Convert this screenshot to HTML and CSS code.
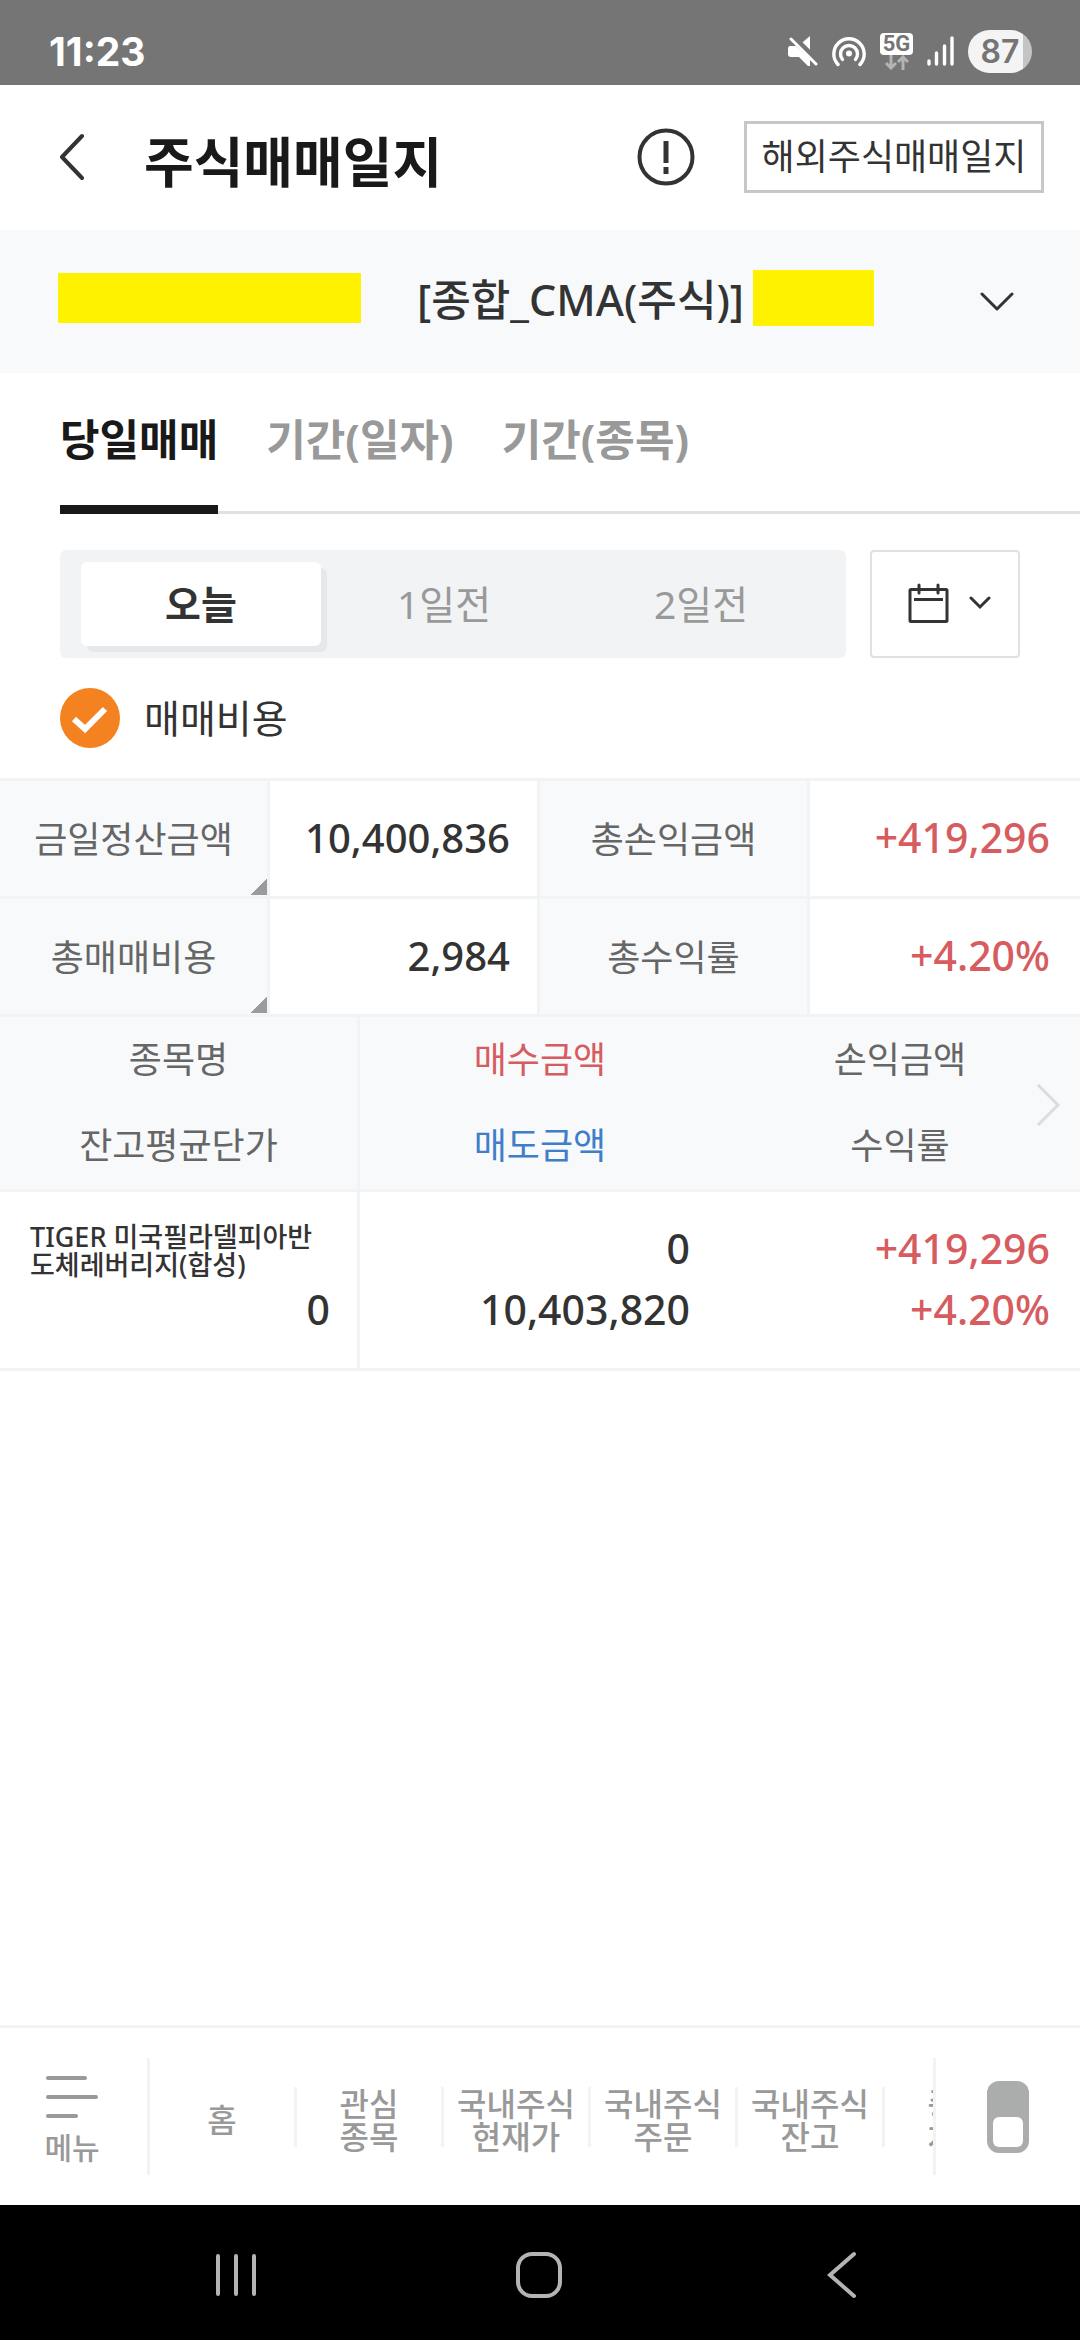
FILE: index.html
```html
<!DOCTYPE html>
<html lang="ko">
<head>
<meta charset="utf-8">
<meta name="viewport" content="width=device-width, initial-scale=1">
<title>주식매매일지</title>
<link rel="stylesheet" href="styles.css">
</head>
<body>
<div class="app">
  <div class="status">
    <span class="clock">11:23</span>
    <div class="status-icons">
      <svg width="30" height="30" viewBox="0 0 30 30" fill="#fff"><path d="M12.500 8 22 0V16.500zM2 10h6L22 23v7h-2L11 21H3Q0 21 0 18v-5q0-3 2-3z"/><path d="M3 3 28 28" stroke="#757575" stroke-width="6" transform="translate(2 -2)"/><path d="M3 3 28 28" stroke="#fff" stroke-width="3" stroke-linecap="round"/></svg>
      <svg width="34" height="31" viewBox="0 0 34 31" fill="none" stroke="#fff" stroke-width="3.400" stroke-linecap="round"><path d="M6 28.500A15.200 15.200 0 1 1 28 28.500"/><path d="M10.500 23.500a8.500 8.500 0 1 1 13 0"/><circle cx="17" cy="17.500" r="3" fill="#fff" stroke="none"/></svg>
      <div class="net">
        <span class="net-label">5G</span>
        <svg width="24" height="15" viewBox="0 0 24 15" fill="none" stroke="#b4b4b4" stroke-width="3"><path d="M6 0v13M1 8l5 5 5-5M18 15V2M13 7l5-5 5 5"/></svg>
      </div>
      <svg width="27" height="30" viewBox="0 0 27 30" stroke="#fff" stroke-width="3.400" stroke-linecap="round"><path d="M2 25v3M9.500 17v11M17.500 10v18M25 2v26"/></svg>
      <span class="battery">87</span>
    </div>
  </div>

  <header class="header">
    <button class="icon-btn" aria-label="뒤로"><svg width="26" height="48" viewBox="0 0 26 48" fill="none" stroke="#333" stroke-width="4" stroke-linecap="round" stroke-linejoin="round"><path d="M24 3 4 24 24 45"/></svg></button>
    <h1 class="title">주식매매일지</h1>
    <button class="icon-btn info" aria-label="안내"><svg width="58" height="58" viewBox="0 0 58 58" fill="none" stroke="#333"><circle cx="29" cy="29" r="26.500" stroke-width="4"/><path d="M29 13v22M29 39v7" stroke-width="5"/></svg></button>
    <button class="outline-btn">해외주식매매일지</button>
  </header>

  <button class="account" aria-label="계좌 선택">
    <span class="mask mask-number"></span>
    <span class="account-name">[종합_CMA(주식)]</span>
    <span class="mask mask-owner"></span>
    <svg class="account-arrow" width="34" height="20" viewBox="0 0 34 20" fill="none" stroke="#333" stroke-width="3" stroke-linecap="round" stroke-linejoin="round"><path d="M2 2 17 17 32 2"/></svg>
  </button>

  <nav class="tabs">
    <a href="#" class="tab tab-on">당일매매</a>
    <a href="#" class="tab">기간(일자)</a>
    <a href="#" class="tab">기간(종목)</a>
  </nav>

  <div class="filters">
    <div class="segment">
      <button class="seg seg-on">오늘</button>
      <button class="seg">1일전</button>
      <button class="seg">2일전</button>
    </div>
    <button class="date-btn" aria-label="날짜 선택">
      <svg width="41" height="40" viewBox="0 0 41 40" fill="none" stroke="#333" stroke-width="3" stroke-linecap="round"><rect x="2" y="6.500" width="37" height="32" rx="1"/><path d="M11 2v8M30 2v8"/><path d="M6 16.500h29" stroke-linecap="butt"/></svg>
      <svg width="22" height="14" viewBox="0 0 22 14" fill="none" stroke="#333" stroke-width="3" stroke-linecap="round"><path d="M2 2 11 11 20 2"/></svg>
    </button>
  </div>

  <label class="cost"><input type="checkbox" class="check" checked>매매비용</label>

  <table class="summary">
    <tr><th class="more">금일정산금액</th><td>10,400,836</td><th>총손익금액</th><td class="up">+419,296</td></tr>
    <tr><th class="more">총매매비용</th><td>2,984</td><th>총수익률</th><td class="up">+4.20%</td></tr>
  </table>

  <div class="trades-wrap">
    <table class="trades">
      <thead>
        <tr>
          <th><span>종목명</span><span>잔고평균단가</span></th>
          <th><span class="buy">매수금액</span><span class="sell">매도금액</span></th>
          <th><span>손익금액</span><span>수익률</span></th>
        </tr>
      </thead>
      <tbody>
        <tr>
          <td><span class="stock">TIGER 미국필라델피아반도체레버리지(합성)</span><span>0</span></td>
          <td><span>0</span><span>10,403,820</span></td>
          <td class="up"><span>+419,296</span><span>+4.20%</span></td>
        </tr>
      </tbody>
    </table>
    <svg class="scroll-hint" width="24" height="42" viewBox="0 0 24 42" fill="none" stroke="#d9dde0" stroke-width="3"><path d="M2 1 22 21 2 41"/></svg>
  </div>

  <footer class="dock">
    <button class="menu">
      <svg width="54" height="42" viewBox="0 0 54 42" stroke="#999" stroke-width="4" stroke-linecap="round"><path d="M3 2h37M3 21h48M3 40h28"/></svg>
      메뉴
    </button>
    <nav class="quick">
      <a href="#">홈</a>
      <a href="#">관심<br>종목</a>
      <a href="#">국내주식<br>현재가</a>
      <a href="#">국내주식<br>주문</a>
      <a href="#">국내주식<br>잔고</a>
      <a href="#">종합<br>차트</a>
    </nav>
    <div class="switch-box"><button class="switch" aria-label="화면 전환"><span class="knob"></span></button></div>
  </footer>

  <div class="sysnav">
    <button class="icon-btn" aria-label="최근 앱"><svg width="48" height="48" viewBox="0 0 48 48" stroke="#b4b4b4" stroke-width="4" stroke-linecap="round"><path d="M6 5v38M24 5v38M42 5v38"/></svg></button>
    <button class="icon-btn" aria-label="홈"><svg width="48" height="48" viewBox="0 0 48 48" fill="none" stroke="#b4b4b4" stroke-width="4"><rect x="3" y="3" width="42" height="42" rx="14"/></svg></button>
    <button class="icon-btn" aria-label="이전"><svg width="48" height="48" viewBox="0 0 48 48" fill="none" stroke="#b4b4b4" stroke-width="4" stroke-linecap="round"><path d="M36 3 12 24 36 45"/></svg></button>
  </div>
</div>
</body>
</html>
```

FILE: styles.css
```css
* { box-sizing: border-box; }
body {
  margin: 0;
  background: #fff;
  color: #333;
  font-family: "Noto Sans", "Noto Sans CJK KR", sans-serif;
}
button {
  margin: 0;
  padding: 0;
  border: 0;
  background: none;
  color: inherit;
  font: inherit;
}
a { color: inherit; text-decoration: none; }
svg { display: block; flex: none; }
.app {
  display: flex;
  flex-direction: column;
  min-height: 100vh;
}
.icon-btn { display: flex; }

.status {
  display: flex;
  align-items: center;
  justify-content: space-between;
  height: 85px;
  padding: 17px 48px 0 49px;
  background: #757575;
  color: #fff;
  font-family: Inter, sans-serif;
  font-weight: 700;
}
.clock { font-size: 39px; }
.status-icons { display: flex; align-items: center; gap: 14px; }
.net { display: flex; flex-direction: column; align-items: center; }
.net-label {
  width: 33px;
  border-radius: 4px;
  background: #fff;
  color: #757575;
  font-family: Roboto, sans-serif;
  font-size: 22px;
  line-height: 22px;
  text-align: center;
}
.battery {
  width: 64px;
  border-radius: 22px;
  background: linear-gradient(to right, #f4f4f4 86%, #c4c4c4 86%);
  color: #757575;
  font-size: 32px;
  font-weight: 600;
  line-height: 43px;
  text-align: center;
}

.header {
  display: flex;
  align-items: center;
  height: 145px;
  padding: 0 36px 2px 58px;
}
.title {
  margin: 6px 0 0 60px;
  color: #191919;
  font-family: "Noto Sans CJK KR", sans-serif;
  font-size: 54px;
  font-weight: 700;
}
.info { margin-left: auto; }
.outline-btn {
  margin-left: 49px;
  width: 300px;
  height: 72px;
  border: 3px solid #c5c7c9;
  font-size: 36px;
  line-height: 64px;
}

.account {
  display: flex;
  align-items: center;
  height: 143px;
  padding: 0 66px 8px 58px;
  background: #f7f9fb;
  text-align: left;
}
.mask { background: #fff200; }
.mask-number { width: 303px; height: 50px; }
.mask-owner { width: 121px; height: 56px; margin-left: 9px; }
.account-name { margin-left: 56px; font-size: 43px; font-weight: 500; }
.account-arrow { margin: 8px 0 0 auto; }

.tabs {
  display: flex;
  gap: 48px;
  height: 141px;
  margin-left: 60px;
  box-shadow: inset 0 -3px #dde2e2;
  color: #999;
  font-size: 43px;
  font-weight: 700;
  line-height: 134px;
}
.tab-on { border-bottom: 9px solid #191919; color: #191919; }

.filters { display: flex; gap: 24px; padding: 36px 60px 0; }
.segment {
  display: grid;
  flex: 1;
  grid-template-columns: 240fr 246fr 268fr;
  padding: 12px 11px 12px 21px;
  border-radius: 6px;
  background: #f1f3f5;
}
.seg { color: #999; font-size: 39px; line-height: 84px; }
.seg-on {
  border-radius: 6px;
  background: #fff;
  box-shadow: 6px 6px #e7e8ea;
  color: #333;
  font-weight: 700;
}
.date-btn {
  display: flex;
  align-items: center;
  justify-content: center;
  gap: 20px;
  width: 150px;
  height: 108px;
  padding: 0 0 2px 8px;
  border: 2px solid #dde2e4;
  border-radius: 4px;
}

.cost {
  display: flex;
  align-items: center;
  align-self: flex-start;
  gap: 24px;
  margin: 30px 60px;
  font-size: 39px;
  line-height: 60px;
}
.check {
  appearance: none;
  width: 60px;
  height: 60px;
  margin: 0;
  border-radius: 50%;
  background: #f58220 url("data:image/svg+xml,%3Csvg xmlns='http://www.w3.org/2000/svg' viewBox='0 0 60 60'%3E%3Cpath d='M14 31 25 41 45 21' fill='none' stroke='%23fff' stroke-width='6'/%3E%3C/svg%3E");
}

table { width: 100%; border-collapse: separate; border-spacing: 0; table-layout: fixed; }
th {
  background: #f7f9fb;
  color: #666;
  font-size: 36px;
  font-weight: 400;
  text-align: center;
}
td {
  padding: 0 27px 0 0;
  font-size: 41px;
  font-weight: 500;
  text-align: right;
}
th, td { border-right: 3px solid #f1f3f5; border-bottom: 3px solid #f1f3f5; }
.up { color: #d65c60; }
.summary { border-top: 3px solid #f1f3f5; }
.summary th, .summary td { height: 118px; padding-bottom: 3px; }
.summary th { padding: 0 0 3px; }
.summary td:nth-child(2) { font-size: 40px; }
.summary td:last-child { border-right: 0; padding-right: 30px; }
.more {
  background: linear-gradient(135deg, transparent 50%, #999b9d 50%) right 0 bottom 1px / 16px 16px no-repeat #f7f9fb;
}
.trades-wrap { position: relative; }
.trades span { display: block; }
.trades th { padding: 0; height: 174px; line-height: 86px; }
.trades td { height: 179px; padding-bottom: 3px; line-height: 61px; }
.trades th + th, .trades td + td { border-right: 0; }
.trades td + td { padding-right: 30px; }
.trades .buy { color: #d65c60; }
.trades .sell { color: #3f7ec8; }
.trades .stock {
  padding: 5px 0 0 30px;
  font-size: 27px;
  line-height: 28px;
  text-align: left;
  word-break: break-all;
}
.scroll-hint { position: absolute; top: 67px; right: 20px; }

.dock {
  display: flex;
  align-items: center;
  height: 180px;
  margin-top: auto;
  border-top: 3px solid #f1f3f4;
  color: #999;
  font-weight: 500;
}
.menu {
  display: flex;
  flex-direction: column;
  align-items: center;
  justify-content: center;
  gap: 8px;
  width: 150px;
  height: 117px;
  padding: 12px 3px 0 0;
  border-right: 3px solid #f1f3f4;
  font-size: 30px;
  line-height: 44px;
}
.quick {
  display: flex;
  flex: 1;
  align-items: center;
  height: 117px;
  overflow: hidden;
}
.quick a {
  display: flex;
  align-items: center;
  justify-content: center;
  flex: none;
  width: 147px;
  height: 60px;
  padding-top: 6px;
  border-right: 3px solid #f1f3f4;
  font-size: 32px;
  line-height: 33px;
  text-align: center;
}
.switch-box {
  display: flex;
  align-items: center;
  justify-content: center;
  width: 147px;
  height: 117px;
  border-left: 3px solid #f1f3f4;
}
.switch {
  display: flex;
  align-items: flex-end;
  width: 42px;
  height: 72px;
  padding: 6px;
  border-radius: 12px;
  background: #abadad;
}
.knob { width: 30px; height: 30px; border-radius: 6px; background: #fff; }

.sysnav {
  display: flex;
  align-items: center;
  justify-content: space-between;
  height: 135px;
  padding: 4px 214px 0 212px;
  background: #000;
}
```
